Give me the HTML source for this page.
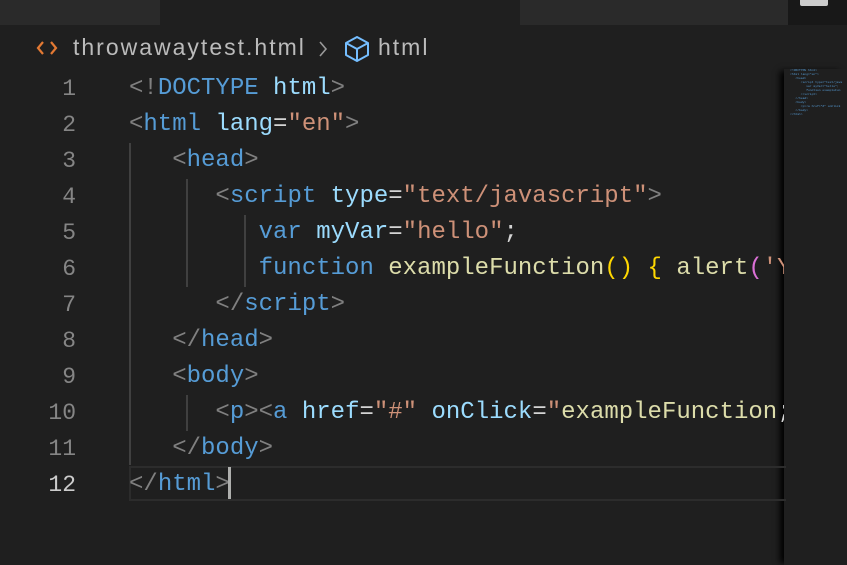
<!DOCTYPE html>
<html><head><style>
body{margin:0;width:847px;height:565px;background:#1f1f1f;overflow:hidden;position:relative;font-family:"Liberation Sans",sans-serif}
.tabs{position:absolute;left:0;top:0;width:847px;height:25px;background:#181818}
.tab{position:absolute;top:0;height:25px}
.bc{position:absolute;top:34px;left:0;height:28px;font-size:23px;color:#bbbbbb;letter-spacing:2px}
.gut{position:absolute;left:0;top:71px;width:76px;font-family:"Liberation Mono",monospace;font-size:23px;color:#858585;text-align:right}
.gut div,.code div{height:36px;line-height:36px;white-space:pre}
.code{position:absolute;left:129px;top:71px;width:655px;overflow:hidden;font-family:"Liberation Mono",monospace;font-size:24px;color:#d4d4d4}
.p{color:#808080}.t{color:#569cd6}.a{color:#9cdcfe}.s{color:#ce9178}.f{color:#dcdcaa}.y{color:#ffd700}.k{color:#da70d6}
.g{position:absolute;width:2px;background:#404040}
</style></head><body>
<div class="tabs">
<div class="tab" style="left:0;width:160px;background:#2a2a2a"></div>
<div class="tab" style="left:160px;width:360px;background:#1f1f1f"></div>
<div class="tab" style="left:520px;width:268px;background:#2a2a2a"></div>
<div class="tab" style="left:800px;top:0;width:28px;height:6px;background:#ccc;border-radius:0 0 2px 2px"></div>
</div>
<div class="bc">
<svg style="position:absolute;left:36px;top:4px" width="22" height="20" viewBox="0 0 22 20"><path d="M7 4 L2 10 L7 16 M15 4 L20 10 L15 16" fill="none" stroke="#e37933" stroke-width="2.2"/></svg>
<span style="position:absolute;left:73px;top:0">throwawaytest.html</span>
<svg style="position:absolute;left:318px;top:6px" width="10" height="18" viewBox="0 0 10 18"><path d="M2 2 L8 9 L2 16" fill="none" stroke="#999" stroke-width="1.6"/></svg>
<svg style="position:absolute;left:343px;top:1px" width="28" height="28" viewBox="0 0 28 28"><path d="M14 2 L25 8 L25 20 L14 26 L3 20 L3 8 Z M3 8 L14 14 L25 8 M14 14 L14 26" fill="none" stroke="#75beff" stroke-width="2" stroke-linejoin="round"/></svg>
<span style="position:absolute;left:378px;top:0">html</span>
</div>
<div style="position:absolute;left:784px;top:69px;width:63px;height:496px;background:#1f1f1f;box-shadow:-6px 0 6px -2px #000"></div>
<div style="position:absolute;left:790px;top:69px;font-family:'Liberation Mono',monospace;font-size:3px;line-height:4px;color:#569cd6;white-space:pre">&lt;!DOCTYPE html&gt;
&lt;html lang="en"&gt;
   &lt;head&gt;
      &lt;script type="text/java
         var myVar="hello";
         function exampleFun
      &lt;/script&gt;
   &lt;/head&gt;
   &lt;body&gt;
      &lt;p&gt;&lt;a href="#" onClick
   &lt;/body&gt;
&lt;/html&gt;</div>
<div style="position:absolute;left:129px;top:466px;width:655px;height:31px;border:2px solid #2c2c2c;border-right:none"></div>
<div class="g" style="left:129px;top:143px;height:322px"></div>
<div class="g" style="left:186px;top:179px;height:108px"></div>
<div class="g" style="left:244px;top:215px;height:72px"></div>
<div class="g" style="left:186px;top:395px;height:36px"></div>
<div class="gut"><div>1</div><div>2</div><div>3</div><div>4</div><div>5</div><div>6</div><div>7</div><div>8</div><div>9</div><div>10</div><div>11</div><div style="color:#cccccc">12</div></div>
<div class="code">
<div><span class="p">&lt;!</span><span class="t">DOCTYPE</span> <span class="a">html</span><span class="p">&gt;</span></div>
<div><span class="p">&lt;</span><span class="t">html</span> <span class="a">lang</span>=<span class="s">"en"</span><span class="p">&gt;</span></div>
<div>   <span class="p">&lt;</span><span class="t">head</span><span class="p">&gt;</span></div>
<div>      <span class="p">&lt;</span><span class="t">script</span> <span class="a">type</span>=<span class="s">"text/javascript"</span><span class="p">&gt;</span></div>
<div>         <span class="t">var</span> <span class="a">myVar</span>=<span class="s">"hello"</span>;</div>
<div>         <span class="t">function</span> <span class="f">exampleFunction</span><span class="y">()</span> <span class="y">{</span> <span class="f">alert</span><span class="k">(</span><span class="s">'You clicked'</span></div>
<div>      <span class="p">&lt;/</span><span class="t">script</span><span class="p">&gt;</span></div>
<div>   <span class="p">&lt;/</span><span class="t">head</span><span class="p">&gt;</span></div>
<div>   <span class="p">&lt;</span><span class="t">body</span><span class="p">&gt;</span></div>
<div>      <span class="p">&lt;</span><span class="t">p</span><span class="p">&gt;&lt;</span><span class="t">a</span> <span class="a">href</span>=<span class="s">"#"</span> <span class="a">onClick</span>=<span class="s">"</span><span class="f">exampleFunction</span>;</div>
<div>   <span class="p">&lt;/</span><span class="t">body</span><span class="p">&gt;</span></div>
<div><span class="p">&lt;/</span><span class="t">html</span><span class="p">&gt;</span></div>
</div>
<div style="position:absolute;left:228px;top:467px;width:3px;height:32px;background:#aeafad"></div>
</body></html>
